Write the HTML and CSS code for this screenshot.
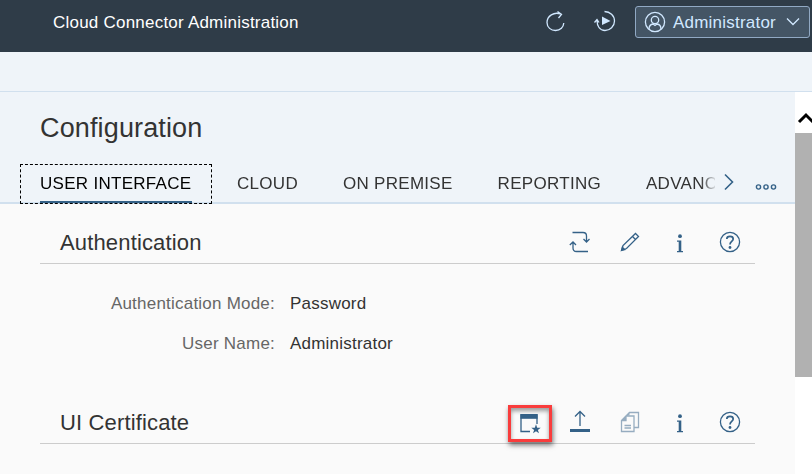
FILE: index.html
```
<!DOCTYPE html>
<html lang="en">
<head>
<meta charset="utf-8">
<title>Cloud Connector Administration</title>
<link rel="stylesheet" href="styles.css">
</head>
<body>
<header class="shell">
  <span class="shell-title">Cloud Connector Administration</span>
  <div class="shell-actions">
    <svg class="shell-icon" width="22" height="24" viewBox="0 0 22 24"><path d="M15.500 4C9 1.500 2 6 2 12.500C2 17.500 6 20.500 10.500 20.500C15.500 20.500 18.500 17 18.800 13M12.500 1.500L16.500 4.300L13.500 8"/></svg>
    <svg class="shell-icon" width="24" height="24" viewBox="0 0 24 24"><path d="M11.500 2.500C17 2.500 21.500 6.500 21.500 12S17 21.500 12 21.500C7 21.500 4 17.500 4 11M1.500 13.500L4 10.500L6 13.500"/><path class="solid" d="M9 7.500L17.500 12L9 16Z"/></svg>
    <button class="user">
      <svg width="22" height="22" viewBox="0 0 22 22"><circle cx="11" cy="11" r="9.600"/><circle cx="11" cy="9" r="3.700"/><path d="M5 18.300C5 14.500 7.500 13.200 9 13L11 14.500L13 13C15 13.200 17 14.500 17 18.300"/></svg>
      <span>Administrator</span>
      <svg width="14" height="10" viewBox="0 0 14 10"><path d="M1 1.500L7 7.500L13 1.500"/></svg>
    </button>
  </div>
</header>
<div class="subheader"></div>
<div class="body">
  <main class="page">
    <div class="page-head">
      <h1>Configuration</h1>
      <nav class="tabs">
        <div class="tab-strip">
          <a class="tab selected">USER INTERFACE</a>
          <a class="tab">CLOUD</a>
          <a class="tab">ON PREMISE</a>
          <a class="tab">REPORTING</a>
          <a class="tab">ADVANCED</a>
        </div>
        <svg class="tab-next" width="12" height="18" viewBox="0 0 12 18"><path d="M2 1.500L9.500 9L2 16.500"/></svg>
        <svg class="tab-more" width="22" height="8" viewBox="0 0 22 8"><circle cx="3.500" cy="4" r="2.100"/><circle cx="11" cy="4" r="2.100"/><circle cx="18.500" cy="4" r="2.100"/></svg>
      </nav>
    </div>
    <section class="panel auth">
      <div class="panel-head">
        <h2>Authentication</h2>
        <div class="tools">
          <span class="tool"><svg width="24" height="24" viewBox="0 0 24 24"><path d="M4.500 2.500H15C17.500 2.500 18.500 4 18.500 6V12M15.500 9L18.500 12L21.500 9M20 21.500H8.500C6 21.500 5 20 5 18V12M1.800 15L5 12L8 15"/></svg></span>
          <span class="tool"><svg width="24" height="24" viewBox="0 0 24 24"><path d="M3.500 20.500L5 15.500L17.500 3.500L20.500 6.500L8.500 18.500ZM14.500 6.500L17.500 9.500"/><path class="fill" d="M3 21L4 16L8 20Z"/></svg></span>
          <span class="tool info"><svg width="24" height="24" viewBox="0 0 24 24"><circle class="fill" cx="12" cy="5.200" r="1.900"/><path class="fill" d="M9 9.500H13.300V20H15V21.300H9V20H10.700V10.800H9Z"/></svg></span>
          <span class="tool"><svg width="24" height="24" viewBox="0 0 24 24"><circle cx="12" cy="12" r="9.600"/><path class="bold" d="M8.800 9C8.800 5.500 15.200 5.500 15.200 9C15.200 11.500 12 11.500 12 14.500"/><circle class="fill" cx="12" cy="17.500" r="1.400"/></svg></span>
        </div>
      </div>
      <dl class="form">
        <dt>Authentication Mode:</dt><dd>Password</dd>
        <dt>User Name:</dt><dd>Administrator</dd>
      </dl>
    </section>
    <section class="panel">
      <div class="panel-head">
        <h2>UI Certificate</h2>
        <div class="tools">
          <span class="tool marked"><svg width="24" height="24" viewBox="0 0 24 24"><path d="M12 20.500H3V4H19V13"/><path class="fill" d="M2.400 3H19.600V7.800H2.400Z"/><path class="fill" d="M18 13.300L19.200 16.800H22.700L19.900 18.900L21 22.200L18 20.200L15 22.200L16.100 18.900L13.300 16.800H16.800Z"/></svg></span>
          <span class="tool"><svg width="24" height="24" viewBox="0 0 24 24"><path d="M12 16V1.500M7 6.500L12 1.500L17 6.500"/><path class="fill" d="M2 19H22V22H2Z"/></svg></span>
          <span class="tool faded"><svg width="24" height="24" viewBox="0 0 24 24"><path d="M8 6H16V21.500H3.500V10.500ZM8 6V10.500H3.500M8.500 5.500L11.500 2.500H20.500V17.500H16M6.500 15.500H13M6.500 18H13"/><path class="fill" d="M3.500 10.500L8 6V10.500ZM8.500 5.500L11.500 2.500V5.500Z"/></svg></span>
          <span class="tool info"><svg width="24" height="24" viewBox="0 0 24 24"><circle class="fill" cx="12" cy="5.200" r="1.900"/><path class="fill" d="M9 9.500H13.300V20H15V21.300H9V20H10.700V10.800H9Z"/></svg></span>
          <span class="tool"><svg width="24" height="24" viewBox="0 0 24 24"><circle cx="12" cy="12" r="9.600"/><path class="bold" d="M8.800 9C8.800 5.500 15.200 5.500 15.200 9C15.200 11.500 12 11.500 12 14.500"/><circle class="fill" cx="12" cy="17.500" r="1.400"/></svg></span>
        </div>
      </div>
    </section>
  </main>
  <div class="scrollbar">
    <div class="scroll-up"><svg width="17" height="14" viewBox="0 0 17 14"><path d="M4 11L11 4L18 11"/></svg></div>
    <div class="thumb"></div>
  </div>
</div>
</body>
</html>
```
FILE: styles.css
```
* { box-sizing: border-box; }
body {
  margin: 0;
  height: 474px;
  overflow: hidden;
  display: flex;
  flex-direction: column;
  background: #fafafa;
  color: #333;
  font: 17px/20px "Liberation Sans", Arial, sans-serif;
  letter-spacing: .22px;
}
svg { display: block; flex: none; fill: none; stroke: currentColor; stroke-width: 1.3; }
h1, h2, dl, dd { margin: 0; font-weight: normal; }

.shell {
  flex: none;
  height: 52px;
  padding: 6px 2px 0 53px;
  display: flex;
  justify-content: space-between;
  align-items: flex-start;
  background: #2f3c48;
  color: #fff;
}
.shell-title { margin-top: 7px; }
.shell-actions { display: flex; color: #d1e8ff; }
.shell-icon { margin: 4px 26px 0 0; }
.shell-icon + .shell-icon { margin: 3px 18px 0 0; }
.solid { fill: currentColor; stroke: none; }
.user {
  width: 175px;
  height: 32px;
  padding: 0 9px 0 8px;
  display: flex;
  align-items: center;
  border: 1px solid #91a9c4;
  border-radius: 3px;
  background: #445565;
  color: #d1e8ff;
  font: inherit;
  letter-spacing: inherit;
}
.user span { margin: 0 auto 0 7px; padding-top: 2px; }

.subheader { flex: none; height: 40px; background: #eff4f9; border-bottom: 1px solid #d1e0ee; }
.body { flex: 1; min-height: 0; display: flex; }
.page { flex: 1; min-width: 0; }
.page-head { height: 112px; padding-top: 20px; background: #eff4f9; border-bottom: 2px solid #d1e0ee; }
h1 { padding-left: 40px; font-size: 27px; line-height: 32px; letter-spacing: .14px; }

.tabs { height: 60px; padding: 20px 0 0 20px; display: flex; }
.tab-strip {
  width: 695px;
  height: 40px;
  display: flex;
  overflow: hidden;
  white-space: nowrap;
  -webkit-mask-image: linear-gradient(90deg, #000 681px, transparent 697px);
  mask-image: linear-gradient(90deg, #000 681px, transparent 697px);
}
.tab { flex: none; margin-left: 45px; line-height: 40px; letter-spacing: .29px; }
.tab.selected {
  width: 192px;
  height: 40px;
  margin: 0 -20px 0 0;
  padding: 0 19px;
  border: 1px dashed #000;
  color: #000;
  line-height: 38px;
  background: linear-gradient(#346187, #346187) 19px 100% / 152px 2px no-repeat;
}
.tab-next { margin: 9px 0 0 8px; color: #346187; stroke-width: 1.6; }
.tab-more { margin: 19px 0 0 20px; color: #346187; stroke-width: 1.4; }

.panel { margin: 0 40px; }
.auth { height: 180px; }
.panel-head {
  height: 60px;
  padding: 0 14px 0 20px;
  display: flex;
  justify-content: space-between;
  border-bottom: 1px solid #ccc;
}
h2 { font-size: 22px; line-height: 38px; margin-top: 20px; letter-spacing: .15px; }
.tools { display: flex; gap: 6px; margin-right: -11px; padding-top: 16px; color: #346187; }
.tool { width: 44px; height: 44px; display: flex; align-items: center; justify-content: center; }
.info { padding-top: 1px; }
.faded { opacity: .5; }
.marked { height: 37px; margin-top: 5px; padding-bottom: 2px; border: 3px solid #f93c3c; box-shadow: 1px 3px 5px rgba(0, 0, 0, .55), inset 0 3px 4px rgba(0, 0, 0, .38); }
.fill { fill: currentColor; stroke: none; }
.bold { stroke-width: 1.7; }

.form { margin-top: 30px; display: grid; grid-template-columns: 235px 1fr; gap: 20px 15px; }
dt { text-align: right; color: #666; }

.scrollbar { width: 17px; flex: none; background: #fff; overflow: hidden; }
.scroll-up { height: 41px; padding-top: 19px; color: #000; }
.scroll-up svg { stroke-width: 3; }
.thumb { height: 244px; background: #b1b1b1; }
```
